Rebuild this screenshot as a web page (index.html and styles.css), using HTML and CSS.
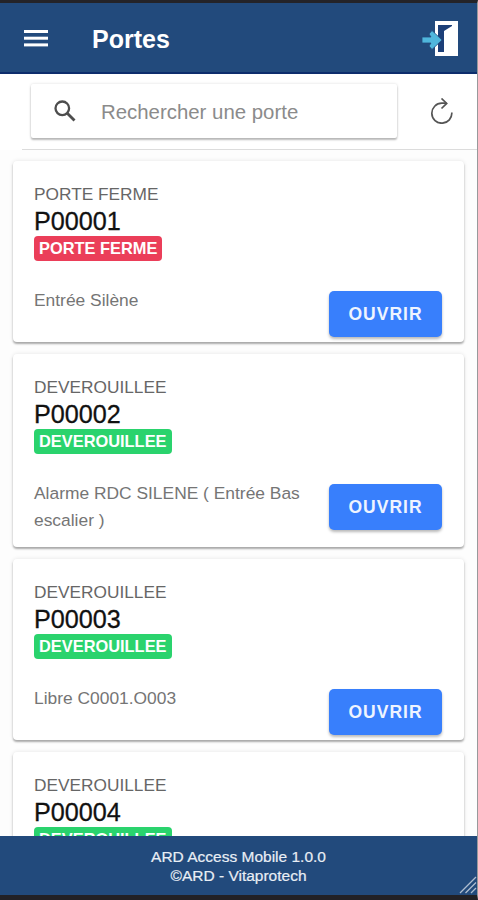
FILE: index.html
```html
<!DOCTYPE html>
<html lang="fr">
<head>
  <meta charset="UTF-8" />
  <meta name="viewport" content="width=device-width, initial-scale=1" />
  <title>Portes</title>
  <link rel="stylesheet" href="styles.css">
</head>
<body>
<div class="app">
  <header class="header">
    <svg class="menu-icon" viewBox="0 0 24 17" fill="#fff">
      <rect width="24" height="3" />
      <rect y="6.7" width="24" height="3" />
      <rect y="13.4" width="24" height="3" />
    </svg>
    <h1>Portes</h1>
    <svg class="exit-icon" viewBox="0 0 37 36">
      <path fill="#fff" d="M13 0H36V35H13Z" />
      <path fill="#1c3f78" d="M16 4H30V5L22 10V31H16Z" />
      <path fill="#4fb6dc" stroke="#224a7c" stroke-width="0.8" d="M0 16V22H9L7 25L10 28.5L20 19L10 9.5L7 13L9 16Z" />
    </svg>
  </header>

  <!-- Search -->
  <div class="toolbar">
    <div class="searchbar">
      <svg class="search-icon" viewBox="0 0 22 22" fill="none" stroke="#4d4d4d">
        <circle cx="8.3" cy="8.3" r="6.8" stroke-width="2.3" />
        <path stroke-width="2.8" d="M13 13L20.5 20.5" />
      </svg>
      <span>Rechercher une porte</span>
    </div>
    <svg class="refresh-icon" viewBox="0 0 24 26" fill="none" stroke="#555" stroke-width="1.7">
      <path d="M21.8 14.5A10 10 0 1 1 11.8 5.2H16.5" />
      <path d="M11.5 0.5L16.7 5.4L11.5 10.5" />
    </svg>
  </div>

  <main class="door-list">
    <div class="card">
      <p class="state">PORTE FERME</p>
      <h2>P00001</h2>
      <span class="badge closed">PORTE FERME</span>
      <div class="card-row">
        <p class="desc">Entrée Silène</p>
        <button class="btn-open">OUVRIR</button>
      </div>
    </div>

    <div class="card">
      <p class="state">DEVEROUILLEE</p>
      <h2>P00002</h2>
      <span class="badge unlocked">DEVEROUILLEE</span>
      <div class="card-row">
        <p class="desc">Alarme RDC SILENE ( Entrée Bas escalier )</p>
        <button class="btn-open">OUVRIR</button>
      </div>
    </div>

    <div class="card">
      <p class="state">DEVEROUILLEE</p>
      <h2>P00003</h2>
      <span class="badge unlocked">DEVEROUILLEE</span>
      <div class="card-row">
        <p class="desc">Libre C0001.O003</p>
        <button class="btn-open">OUVRIR</button>
      </div>
    </div>

    <div class="card">
      <p class="state">DEVEROUILLEE</p>
      <h2>P00004</h2>
      <span class="badge unlocked">DEVEROUILLEE</span>
    </div>
  </main>

  <footer class="footer">
    <p>ARD Access Mobile 1.0.0</p>
    <p>©ARD - Vitaprotech</p>
    <svg class="grip" viewBox="0 0 18 18" stroke="#aebdd0" stroke-width="1.3">
      <path d="M1 17L17 1M6.5 17L17 6.5M12 17L17 12" />
    </svg>
  </footer>
</div>
</body>
</html>
```

FILE: styles.css
```css
* {
  box-sizing: border-box;
}

body {
  margin: 0;
  font-family: "Liberation Sans", Arial, sans-serif;
  background: #fff;
}

h1, h2, p {
  margin: 0;
}

.app {
  display: flex;
  flex-direction: column;
  height: 900px;
  overflow: hidden;
  border-top: 3px solid #242328;
  border-right: 1px solid #98999b;
  border-bottom: 5px solid #222126;
}

/* Header */
.header {
  display: flex;
  align-items: center;
  flex-shrink: 0;
  height: 71px;
  padding: 0 18px 0 24px;
  background: #224a7c;
  border-bottom: 2px solid #0d2d6c;
  color: #fff;
}

.header h1 {
  flex: 1;
  margin-left: 44px;
  padding-top: 3px;
  font-size: 25px;
  line-height: 30px;
}

.menu-icon {
  width: 24px;
  height: 17px;
  margin-top: 2px;
}

.exit-icon {
  width: 37px;
  height: 36px;
  margin-top: 3px;
}

/* Search bar */
.toolbar {
  display: flex;
  align-items: flex-start;
  justify-content: space-between;
  flex-shrink: 0;
  height: 76px;
  margin-left: 22px;
  padding: 10px 23px 0 9px;
  border-bottom: 1px solid #dcdcdc;
}

.searchbar {
  display: flex;
  align-items: center;
  gap: 25px;
  width: 366px;
  height: 54px;
  padding-left: 23px;
  border-radius: 2px;
  box-shadow: 0 2px 2px rgba(0, 0, 0, 0.25), 0 0 3px rgba(0, 0, 0, 0.14);
  color: #8b8b8b;
  font-size: 20.4px;
}

.searchbar span {
  padding-top: 2px;
}

.search-icon {
  width: 22px;
  height: 22px;
}

.refresh-icon {
  width: 24px;
  height: 26px;
  margin-top: 14px;
}

/* Cards */
.door-list {
  flex: 1;
  min-height: 0;
  overflow: hidden;
  padding: 11px 13px 0 13px;
  background: #fdfdfd;
}

.card {
  margin-bottom: 12px;
  padding: 22px 22px 5px 21px;
  border-radius: 4px;
  background: #fff;
  box-shadow: 0 2px 2px rgba(0, 0, 0, 0.3), 0 0 4px rgba(0, 0, 0, 0.1);
}

.state {
  color: #666;
  font-size: 17.3px;
  line-height: 22px;
}

.card h2 {
  padding-top: 1px;
  color: #111;
  font-size: 25.2px;
  font-weight: normal;
  line-height: 30px;
  -webkit-text-stroke: 0.3px #111;
}

.badge {
  display: block;
  width: fit-content;
  height: 25px;
  padding: 0 5px;
  border-radius: 4px;
  color: #fff;
  font-size: 16.4px;
  font-weight: bold;
  line-height: 25px;
}

.closed {
  background: #eb3e59;
}

.unlocked {
  background: #2ad36d;
}

.card-row {
  display: flex;
  align-items: flex-start;
  justify-content: space-between;
  padding-top: 25px;
}

.desc {
  width: 280px;
  padding-top: 1px;
  padding-bottom: 8px;
  color: #757575;
  font-size: 17.4px;
  line-height: 27px;
}

.btn-open {
  width: 113px;
  height: 46px;
  margin-top: 5px;
  padding: 0;
  border: none;
  border-radius: 5px;
  background: #387ffc;
  box-shadow: 0 2px 3px rgba(0, 0, 0, 0.28);
  color: #eef4ff;
  font-family: inherit;
  font-size: 17.5px;
  font-weight: bold;
  letter-spacing: 1px;
}

/* Footer */
.footer {
  position: relative;
  flex-shrink: 0;
  height: 59px;
  padding-top: 11px;
  background: #224a7c;
  color: #e9eef5;
  font-size: 15.5px;
  line-height: 19px;
  text-align: center;
  -webkit-text-stroke: 0.2px #e9eef5;
}

.grip {
  position: absolute;
  right: 0;
  bottom: 1px;
  width: 18px;
  height: 18px;
}
```
